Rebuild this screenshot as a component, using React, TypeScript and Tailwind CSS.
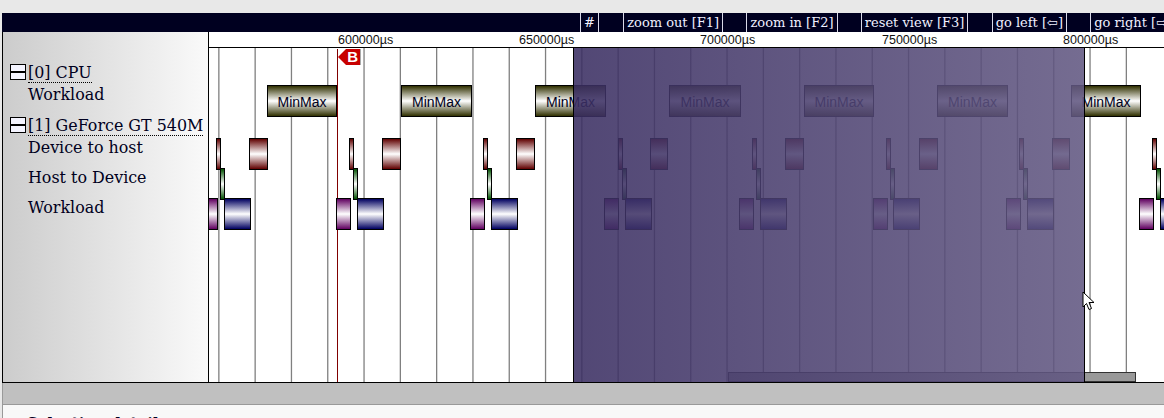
const GRID = Array.from({ length: 26 }, (_, i) => 218.2 + i * 36.3 - 209)
const RULER = [
  { x: 338, label: "600000µs" },
  { x: 519, label: "650000µs" },
  { x: 700, label: "700000µs" },
  { x: 882, label: "750000µs" },
  { x: 1063, label: "800000µs" },
]
const MINMAX = [[267, 337], [401, 472], [535, 606], [669, 741], [804, 874], [937, 1008], [1071, 1141]]
const TO_HOST = [[216, 221], [249, 268], [349, 354], [382, 401], [483, 488], [516, 535], [618, 623], [650, 668], [752, 757], [785, 804], [886, 891], [919, 938], [1019, 1024], [1052, 1070], [1152, 1157]]
const TO_DEVICE = [220, 353, 487, 622, 756, 890, 1023, 1156]
const PURPLE = [[204, 218], [336, 351], [470, 485], [604, 619], [739, 754], [873, 888], [1006, 1021], [1139, 1154]]
const BLUE = [[224, 251], [357, 384], [491, 518], [625, 652], [760, 787], [893, 920], [1027, 1054], [1160, 1187]]
const TOOLS = ["#", "zoom out [F1]", "zoom in [F2]", "reset view [F3]", "go left [⇦]", "go right [⇨]"]

function Collapse() {
  return (
    <span className="mt-[2px] w-[16px] h-[16px] shrink-0 border border-black bg-[#f4f4ff] flex items-center">
      <span className="h-[2px] w-full bg-black" />
    </span>
  )
}

function DeviceHeader({ children }: { children: string }) {
  return (
    <div className="flex h-[21px] ml-[7px] gap-[2px]">
      <Collapse />
      <span className="h-[21px] border-b border-dotted border-black leading-[22px] whitespace-nowrap">{children}</span>
    </div>
  )
}

export default function App() {
  return (
    <div className="w-full h-[418px] overflow-hidden bg-[#e8e8e8] font-['DejaVu_Serif',serif] text-[#000020]">
      <div className="h-[13px]" />
      <div className="ml-[2px] pl-[578px] flex gap-[23.3px] h-[19px] bg-[#000020] text-[13px] leading-[19px] text-[#f0f0ff] whitespace-nowrap overflow-hidden">
        {TOOLS.map((t, i) => (
          <span key={t} className={`shrink-0 border-x border-[#d8d8e8] px-[3px] ${i === 0 ? "mr-[1px]" : ""}`}>
            {t}
          </span>
        ))}
      </div>
      <div className="ml-[2px] flex h-[351px] border-l border-b border-black bg-white">
        <div className="w-[205px] shrink-0 bg-linear-to-r from-[#cccccc] to-[#fafafa] pt-[30px] text-[15.9px]">
          <DeviceHeader>[0] CPU</DeviceHeader>
          <div className="ml-[25px] h-[32px] leading-[24px]">Workload</div>
          <DeviceHeader>[1] GeForce GT 540M</DeviceHeader>
          <div className="ml-[25px] h-[30px] leading-[24px]">Device to host</div>
          <div className="ml-[25px] h-[30px] leading-[24px]">Host to Device</div>
          <div className="ml-[25px] h-[30px] leading-[24px]">Workload</div>
        </div>
        <div className="relative flex-1 border-l border-black overflow-hidden">
          <div className="h-[16px] border-b border-black" />
          {RULER.map((r) => (
            <span key={r.x} className="absolute top-0 text-[12.5px] leading-[16px] font-['Liberation_Sans',sans-serif] text-[#111]" style={{ left: r.x - 209 }}>
              {r.label}
            </span>
          ))}
          <svg className="absolute left-0 top-[16px]" width="955" height="335">
            {GRID.map((x) => (
              <rect key={x} x={x} y="0" width="1.3" height="335" fill="#808080" />
            ))}
          </svg>
          <div className="absolute top-[17px] bottom-0 left-[128px] w-px bg-[#800000]" />
          <div className="absolute top-[17px] left-[129px] h-[16px] w-[23px] bg-[linear-gradient(to_right,#c80000_22px,#aaa_22px)] [clip-path:polygon(0_50%,8px_0,100%_0,100%_100%,8px_100%)] flex items-center justify-end pr-[3px] font-['Liberation_Sans',sans-serif] font-bold text-[15px] text-white">
            B
          </div>
          {MINMAX.map(([a, b]) => (
            <div key={a} className="absolute top-[53px] h-[32px] pt-[2px] border border-black bg-linear-to-b/srgb from-[#303000] via-white to-[#303000] flex items-center justify-center font-['Liberation_Sans',sans-serif] text-[14px] text-[#000020]" style={{ left: a - 209, width: b - a }}>
              MinMax
            </div>
          ))}
          {TO_HOST.map(([a, b]) => (
            <div key={a} className="absolute top-[106px] h-[32px] border border-black bg-linear-to-b/srgb from-[#600000] via-white to-[#600000]" style={{ left: a - 209, width: b - a }} />
          ))}
          {TO_DEVICE.map((a) => (
            <div key={a} className="absolute top-[136px] h-[32px] w-[5px] border border-black bg-linear-to-b/srgb from-[#005000] via-white to-[#005000]" style={{ left: a - 209 }} />
          ))}
          {PURPLE.map(([a, b]) => (
            <div key={a} className="absolute top-[166px] h-[32px] border border-black bg-linear-to-b/srgb from-[#600060] via-white to-[#600060]" style={{ left: a - 209, width: b - a }} />
          ))}
          {BLUE.map(([a, b]) => (
            <div key={a} className="absolute top-[166px] h-[32px] border border-black bg-linear-to-b/srgb from-[#000060] via-white to-[#000060]" style={{ left: a - 209, width: b - a }} />
          ))}
          <div className="absolute top-[340px] left-[519px] w-[408px] h-[10px] border border-[#333] bg-[#999]" />
          <div className="absolute top-[16px] bottom-0 left-[364px] w-[512px] border-x border-black bg-linear-to-r/srgb from-[#3a2e62]/[.88] to-[#625882]/[.88]" />
          {/* cursor sits over the right edge of the selection */}
          <svg className="absolute left-[873px] top-[259px]" width="14" height="22" viewBox="0 0 14 22">
            <path d="M1 1 L1 16 L4.5 12.5 L7 18.5 L9.5 17.5 L7 11.5 L12 11.5 Z" fill="#fff" stroke="#000" strokeWidth="1" />
          </svg>
        </div>
      </div>
      <div className="ml-[2px] h-[22px] bg-[#c0c0c0] border-l border-b border-[#999]" />
      <div className="ml-[2px] h-[13px] border-l border-[#999] bg-[#f8f8f8] pl-[24px] pt-[9px] text-[15px] font-bold leading-[18px] overflow-hidden whitespace-nowrap">
        Selection details
      </div>
    </div>
  )
}
